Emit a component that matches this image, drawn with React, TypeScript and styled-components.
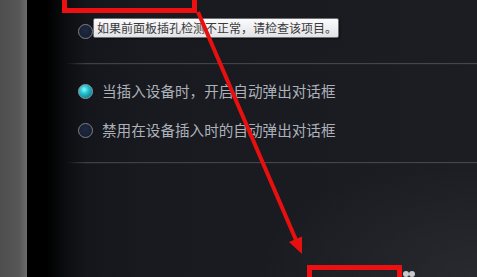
import React from 'react';
import styled, { createGlobalStyle } from 'styled-components';

const GlobalStyle = createGlobalStyle`
  html, body {
    margin: 0;
    padding: 0;
    background: #000;
  }
  body {
    font-family: "Noto Sans CJK SC", "Noto Sans", sans-serif;
  }
`;

interface OptionProps {
  label?: string;
  checked?: boolean;
}

const Option: React.FC<OptionProps> = ({ label, checked }) => (
  <Row>
    <Radio checked={checked} />
    {label && <Label>{label}</Label>}
  </Row>
);

const App: React.FC = () => {
  return (
    <Page>
      <GlobalStyle />
      <LeftStrip />
      <Panel>
        <Content>
          {/* label of the first option sits under the tooltip */}
          <Option />
          <Separator />
          <Option label="当插入设备时，开启自动弹出对话框" checked />
          <Option label="禁用在设备插入时的自动弹出对话框" />
          <Separator />
        </Content>
      </Panel>

      <Tooltip>如果前面板插孔检测不正常，请检查该项目。</Tooltip>
      <MarkBox $left={62} $top={-6} $width={135} $height={19} />
      <MarkBox $left={307} $top={265} $width={95} $height={20} />
      <Dots>
        <Dot />
        <Dot />
      </Dots>
      <Arrow width="477" height="277" viewBox="0 0 477 277">
        <line x1="198" y1="12" x2="296" y2="240" stroke="#e8100f" strokeWidth="4" />
        <polygon points="302,254 289,242 302,236.5" fill="#e8100f" />
      </Arrow>
    </Page>
  );
};

export default App;

const Page = styled.div`
  position: relative;
  display: flex;
  width: 477px;
  height: 277px;
  overflow: hidden;
`;

const LeftStrip = styled.div`
  width: 27px;
  flex-shrink: 0;
  background: linear-gradient(to right, #4e4e4e 0%, #575757 70%, #6c6c6c 100%);
`;

const Panel = styled.div`
  flex: 1;
  background:
    radial-gradient(ellipse 220px 120px at 100% 100%, rgba(50, 52, 58, 0.55), rgba(50, 52, 58, 0)),
    linear-gradient(to right, #000 0px, #000 20px, #0c0d10 38px, #14161b 60px, #181a20 120px, #1b1d23 100%);
`;

const Content = styled.div`
  display: flex;
  flex-direction: column;
  padding: 20px 0 0 51px;
`;

const Row = styled.div`
  display: flex;
  align-items: center;
  gap: 9px;
  height: 22px;

  & + & {
    margin-top: 17px;
  }
`;

const Radio = styled.span<{ checked?: boolean }>`
  box-sizing: border-box;
  width: 15px;
  height: 15px;
  border-radius: 50%;
  flex-shrink: 0;
  border: 1.5px solid ${(p) => (p.checked ? '#8fa3ab' : '#7d838c')};
  background: ${(p) =>
    p.checked
      ? 'radial-gradient(circle at 40% 35%, #8ff6fb 0%, #25c4d2 35%, #0a7c8c 80%, #06505c 100%)'
      : 'radial-gradient(circle at 50% 40%, #1f2a42 0%, #141b2c 100%)'};
`;

const Label = styled.span`
  font-size: 14.6px;
  line-height: 22px;
  color: #adb2ba;
  white-space: nowrap;
`;

const Separator = styled.div`
  height: 1px;
  margin: 21px 0 15px -12px;
  background: linear-gradient(to right, rgba(70, 73, 80, 0) 0px, #3d4047 20px, #44474e 100%);
  border-bottom: 1px solid rgba(10, 11, 14, 0.6);
`;

const Tooltip = styled.div`
  position: absolute;
  left: 93px;
  top: 18px;
  box-sizing: border-box;
  width: 246px;
  height: 20px;
  padding-left: 3px;
  border: 1px solid #707070;
  border-radius: 2px;
  background: linear-gradient(#fbfbfc, #e2e3e8);
  box-shadow: 1px 1px 2px rgba(0, 0, 0, 0.5);
  color: #3a3a3a;
  font-size: 12px;
  line-height: 18px;
  white-space: nowrap;
`;

const MarkBox = styled.div<{ $left: number; $top: number; $width: number; $height: number }>`
  position: absolute;
  left: ${(p) => p.$left}px;
  top: ${(p) => p.$top}px;
  width: ${(p) => p.$width}px;
  height: ${(p) => p.$height}px;
  box-sizing: border-box;
  border: 5px solid #ec1010;
`;

const Dots = styled.div`
  position: absolute;
  left: 403px;
  top: 271px;
  display: flex;
`;

const Dot = styled.span`
  width: 6px;
  height: 6px;
  border-radius: 50%;
  background: #c9cacc;
`;

const Arrow = styled.svg`
  position: absolute;
  left: 0;
  top: 0;
  pointer-events: none;
`;
